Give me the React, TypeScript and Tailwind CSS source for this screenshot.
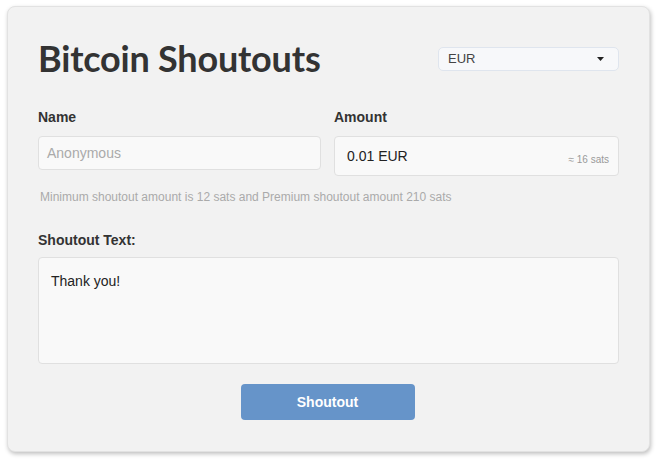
export default function App() {
  return (
    <div className="w-[658px] h-[460px] bg-white pt-[6px] pl-[7px]">
      <div
        className="w-[643px] h-[446px] rounded-[8px] bg-[#f2f2f2] border border-[#e2e2e2] shadow-[1px_2px_4px_rgba(0,0,0,0.25)] px-[30px] pt-[31px]"
        style={{ fontFamily: '"Liberation Sans", Arial, sans-serif' }}
      >
        {/* Header */}
        <div className="flex items-start justify-between">
          <h1
            className="text-[36px] leading-[40px] font-bold text-[#333333] tracking-[-0.2px]"
            style={{ fontFamily: 'Lato, "Open Sans", sans-serif' }}
          >
            Bitcoin Shoutouts
          </h1>
          <div className="mt-[9px] w-[181px] h-[24px] rounded-[5px] border border-[#dfe5ee] bg-[#f7f8fa] flex items-center justify-between pl-[9px] pr-[14px]">
            <span className="text-[13px] text-[#444]">EUR</span>
            <svg width="7" height="4" viewBox="0 0 7 4">
              <path d="M0 0h7L3.5 4z" fill="#222" />
            </svg>
          </div>
        </div>

        {/* Name / Amount */}
        <div className="grid grid-cols-[283px_1fr] gap-[13px] mt-[30px]">
          <div>
            <div className="text-[14px] font-bold text-[#333] leading-[18px]">Name</div>
            <div className="mt-[10px] h-[34px] rounded-[4px] border border-[#e0e0e0] bg-[#f9f9f9] flex items-center px-[8px]">
              <span className="text-[14px] text-[#aaaaaa]">Anonymous</span>
            </div>
          </div>
          <div>
            <div className="text-[14px] font-bold text-[#333] leading-[18px]">Amount</div>
            <div className="mt-[10px] h-[40px] rounded-[4px] border border-[#e0e0e0] bg-[#f9f9f9] flex items-center justify-between pl-[12px] pr-[9px]">
              <span className="text-[14px] text-[#222]">0.01 EUR</span>
              <span className="text-[10px] text-[#999] mt-[6px]">≈ 16 sats</span>
            </div>
          </div>
        </div>

        <p className="mt-[13px] ml-[2px] text-[12px] text-[#aaaaaa] leading-[16px]">
          Minimum shoutout amount is 12 sats and Premium shoutout amount 210 sats
        </p>

        {/* Shoutout text */}
        <div className="mt-[26px] text-[14px] font-bold text-[#333] leading-[18px]">Shoutout Text:</div>
        <div className="mt-[8px] h-[107px] rounded-[4px] border border-[#e0e0e0] bg-[#f9f9f9] px-[12px] pt-[11px]">
          <span className="text-[14px] text-[#222]">Thank you!</span>
        </div>

        <div className="flex justify-center mt-[20px] pr-[2px]">
          <button className="w-[174px] h-[36px] rounded-[4px] bg-[#6694c9] text-white text-[14px] font-bold">
            Shoutout
          </button>
        </div>
      </div>
    </div>
  );
}
